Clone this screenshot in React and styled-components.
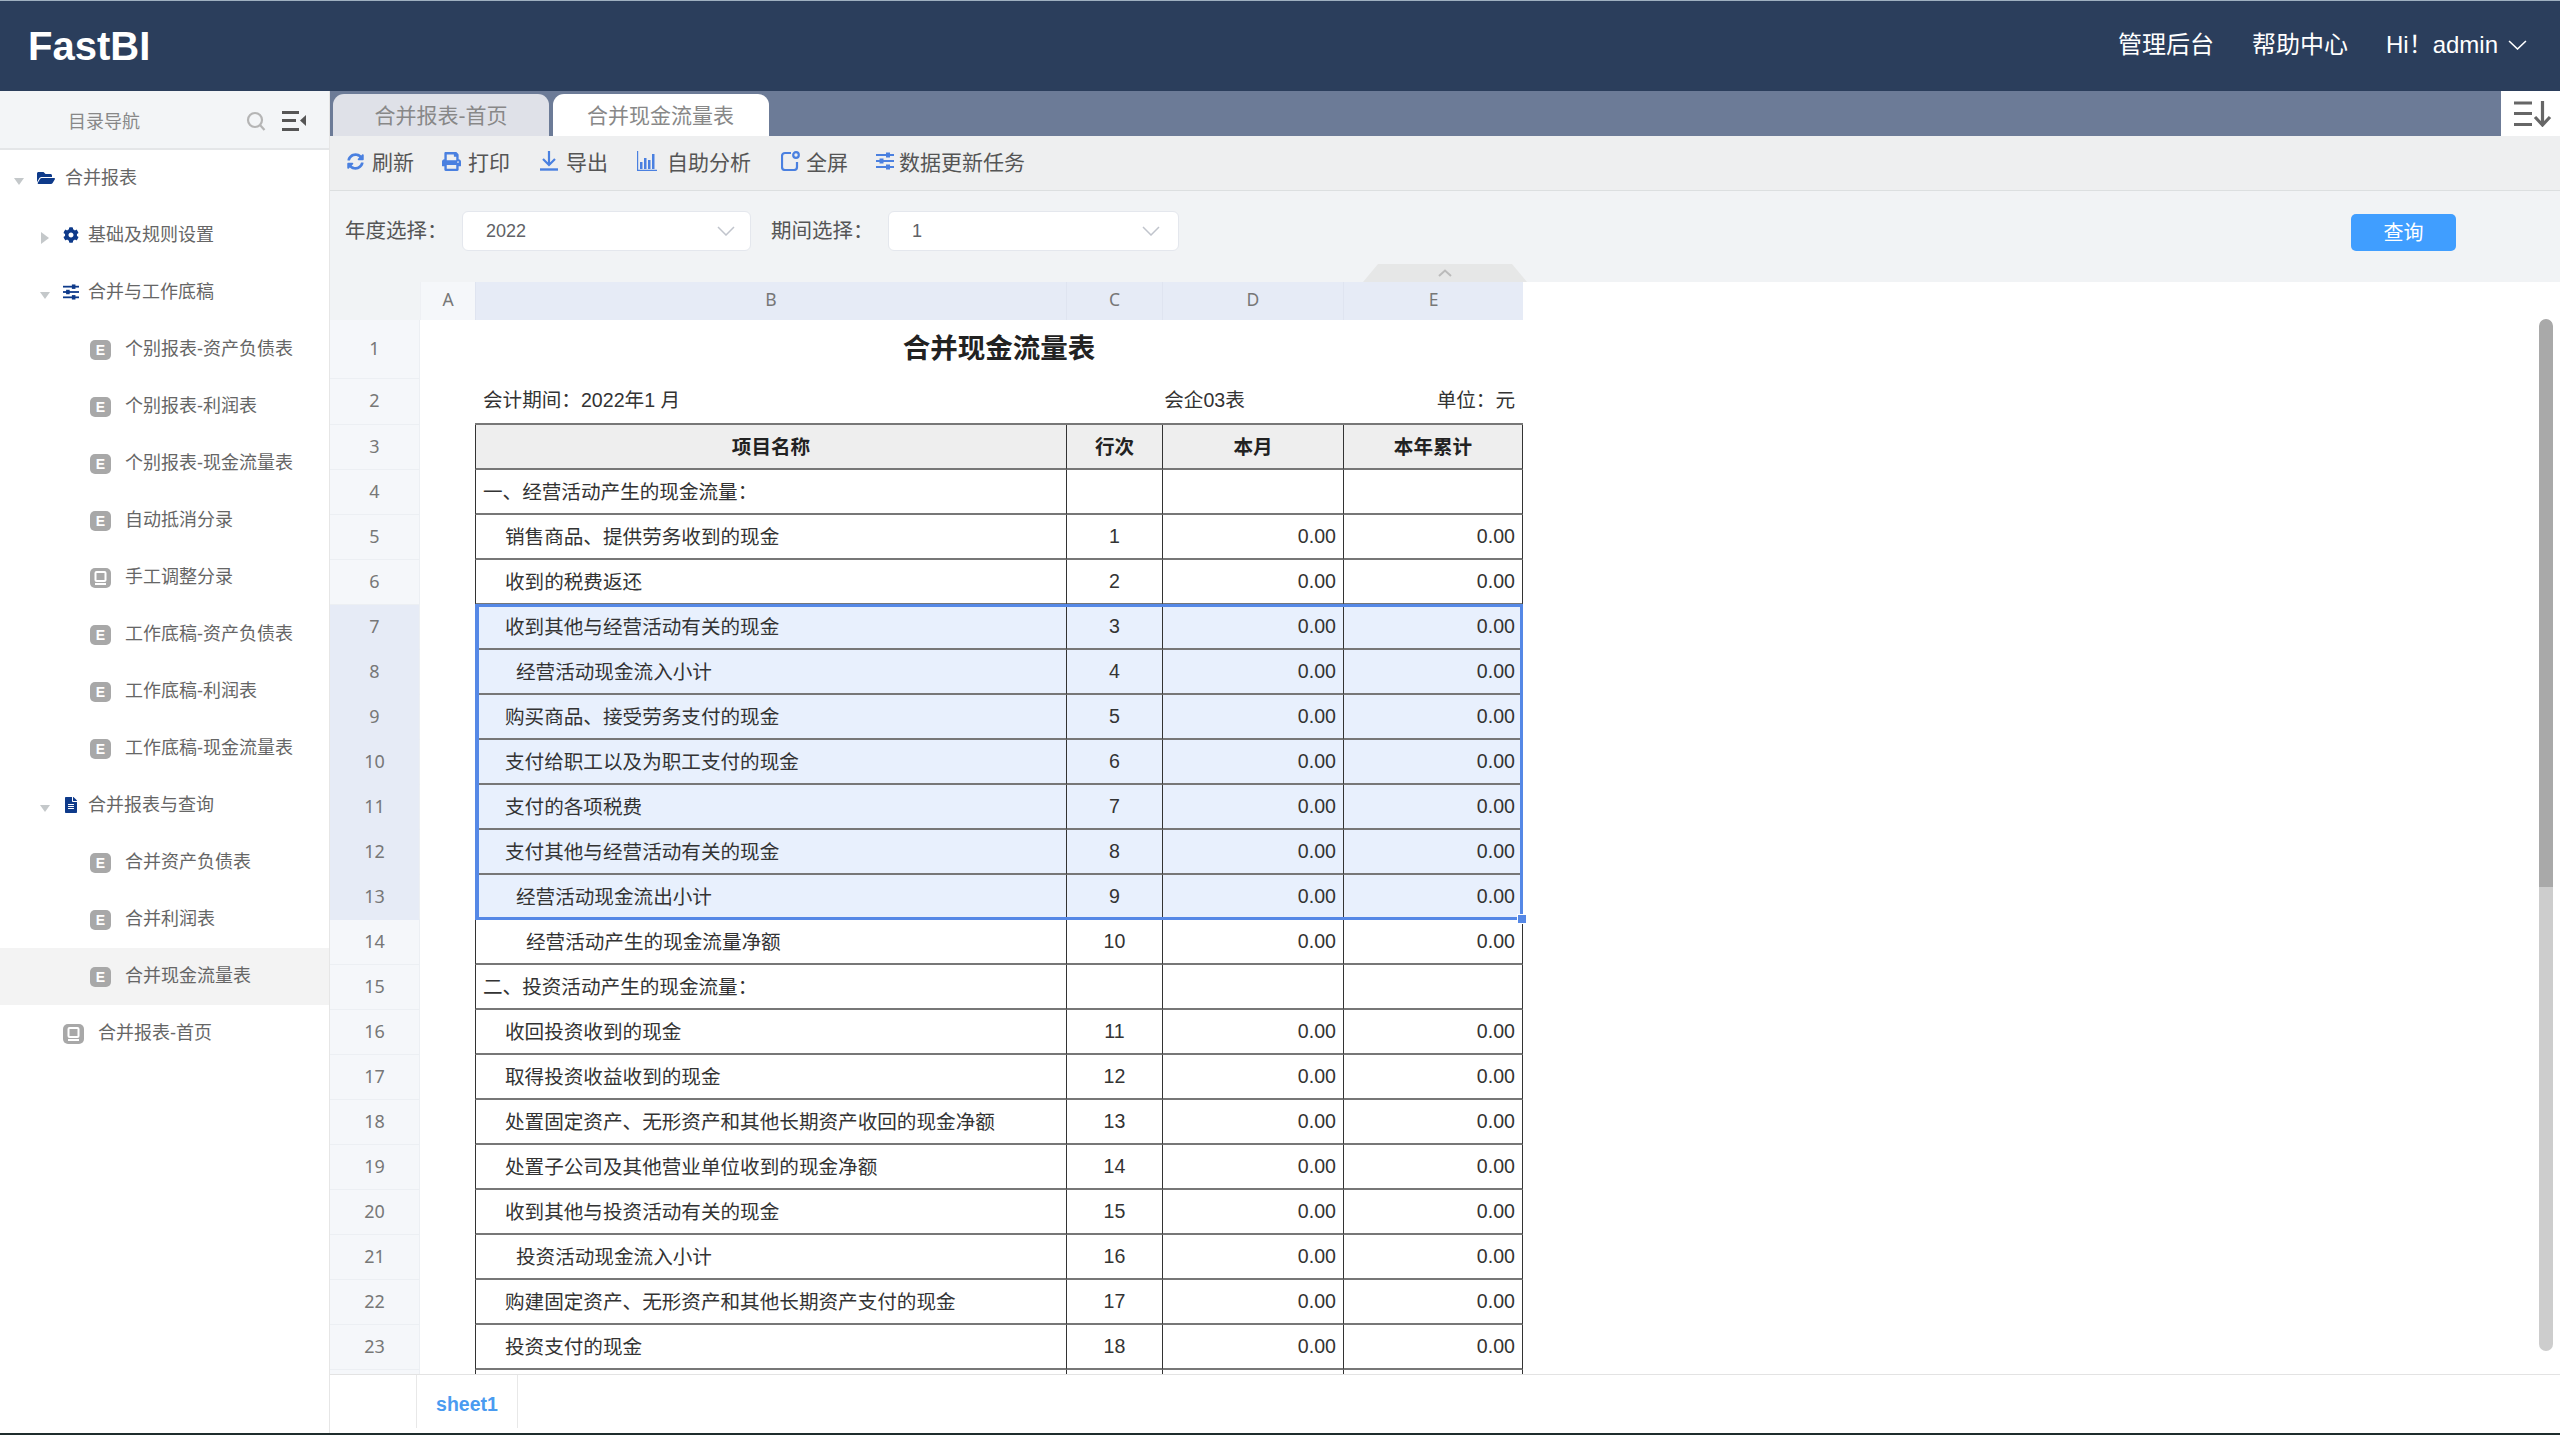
import React from "react";
import styled, { createGlobalStyle } from "styled-components";
import { FaFolderOpen, FaCog, FaFileAlt, FaPrint, FaSyncAlt } from "react-icons/fa";

const Global = createGlobalStyle`
  html, body { margin: 0; padding: 0; background: #fff; }
  * { box-sizing: border-box; }
  body { font-family: "Liberation Sans", "Noto Sans CJK SC", sans-serif; }
`;

const Page = styled.div`
  width: 2560px; height: 1435px; display: flex; flex-direction: column;
  overflow: hidden; border-bottom: 2px solid #1f2d2d;
`;
const Header = styled.header`
  height: 91px; flex: none; display: flex; align-items: center;
  background: #2b3e5c; border-top: 1px solid #9fb0c0; padding: 0 33px 0 28px; color: #fff;
`;
const Logo = styled.div`font-size: 40px; font-weight: 700; flex: 1; line-height: 1;`;
const HeadLink = styled.a`font-size: 24px; margin-right: 38px; padding-bottom: 7px; color: #fff;`;
const UserMenu = styled.div`display: flex; align-items: center; font-size: 24px; gap: 10px; padding-bottom: 3px;`;
const UserName = styled.span`padding-bottom: 4px;`;

const Body = styled.div`flex: 1; display: flex; min-height: 0;`;
const Sidebar = styled.aside`width: 330px; flex: none; border-right: 1px solid #e6e6e6; background: #fff;`;
const SideHead = styled.div`
  height: 59px; display: flex; align-items: center; padding: 2px 23px 0 68px;
  background: #f3f5f7; border-bottom: 2px solid #e4e6e8; color: #888; font-size: 18px; gap: 16px;
`;
const SideTitle = styled.span`flex: 1; padding-bottom: 2px;`;
const TreeRow = styled.div`
  height: 57px; display: flex; align-items: center; padding-left: ${p => p.$pad}px;
  background: ${p => (p.$active ? "#f3f3f3" : "transparent")};
  color: #666; font-size: 18px; white-space: nowrap;
`;
const TreeLabel = styled.span`padding-bottom: 6px;`;
const Caret = styled.i`
  flex: none; width: 11px; margin-right: 13px; display: flex; justify-content: center; margin-top: 5px;
  &::before {
    content: ""; border-style: solid; display: block;
    border-width: ${p => (p.$open ? "7px 5.5px 0 5.5px" : "6px 0 6px 8px")};
    border-color: ${p => (p.$open ? "#c4c8ca transparent transparent transparent" : "transparent transparent transparent #c4c8ca")};
  }
`;
const DirIcon = styled.span`
  flex: none; width: ${p => p.$w}px; margin-right: ${p => p.$mr}px; display: flex;
  align-items: center; justify-content: center; color: #0e3a8a; font-size: ${p => p.$w}px;
  padding-bottom: 2px;
`;
const FileBadge = styled.span`
  flex: none; width: 21px; height: 20px; margin-right: 14px; border-radius: 5px;
  background: #a8a8a8; color: #fff; font: 700 14px/20px "Liberation Sans", sans-serif;
  text-align: center; display: flex; align-items: center; justify-content: center;
`;

const Main = styled.main`flex: 1; min-width: 0; display: flex; flex-direction: column;`;
const TabBar = styled.div`
  height: 45px; flex: none; display: flex; align-items: flex-end; gap: 3.500px;
  background: #6c7b97; padding-left: 3px;
`;
const Tab = styled.div`
  width: 216px; height: 42px; border-radius: 11px 11px 0 0; font-size: 21px; line-height: 44px;
  text-align: center; color: #888; background: ${p => (p.$active ? "#fff" : "#dfe1e8")};
`;
const SideToggle = styled.div`
  width: 59px; height: 45px; margin-left: auto; background: #fff; color: #666;
  display: flex; align-items: center; justify-content: center; padding-left: 4px;
`;
const Toolbar = styled.div`
  height: 55px; flex: none; display: flex; align-items: center; padding: 0 0 4px 17px;
  background: #eeeff0; border-bottom: 1px solid #dcdfe0;
`;
const Tool = styled.button`
  all: unset; display: flex; align-items: center; gap: ${p => p.$gap}px; margin-right: ${p => p.$mr}px;
  color: #555; font: 21px "Liberation Sans", "Noto Sans CJK SC", sans-serif; white-space: nowrap;
  svg { color: #4a80e0; flex: none; }
`;
const FilterBar = styled.div`
  height: 91px; flex: none; position: relative; display: flex; align-items: flex-start;
  padding: 20px 104px 0 15px; background: #f1f3f5;
`;
const FilterLabel = styled.label`width: ${p => p.$w}px; flex: none; font-size: 20.500px; line-height: 40px; color: #555;`;
const Select = styled.div`
  width: ${p => p.$w}px; height: 40px; flex: none; margin-right: ${p => p.$mr || 0}px;
  display: flex; align-items: center; justify-content: space-between;
  padding: 0 ${p => p.$pr}px 0 23px; background: #fff; border: 1px solid #e4e7ed; border-radius: 6px;
  color: #606266; font-size: 18px;
`;
const QueryBtn = styled.button`
  all: unset; width: 105px; height: 37px; margin: 3px 0 0 auto; background: #409eff; color: #fff;
  border-radius: 5px; text-align: center; font: 20px/38px "Liberation Sans", "Noto Sans CJK SC", sans-serif;
`;
const Collapse = styled.div`
  position: absolute; left: 1033px; top: 73px; width: 164px; height: 18px; background: #e6e7e7;
  clip-path: polygon(15px 0, 149px 0, 164px 100%, 0 100%);
  display: flex; justify-content: center; align-items: center; color: #bbb;
`;

const Sheet = styled.section`flex: 1; min-height: 0; position: relative; overflow: hidden; background: #fff;`;
const GridBody = styled.div`position: relative; width: 1193px;`;
const Row = styled.div`
  display: grid; grid-template-columns: 90px 55px 591px 96px 181px 180px;
  height: ${p => p.$h || 45}px;
  font-size: 19.600px; color: #333;
`;
const Corner = styled.div`background: #f1f3f5;`;
const ColHead = styled.div`
  display: flex; align-items: center; justify-content: center; padding-bottom: 5px;
  font: 17.500px "Noto Sans", sans-serif; color: #777;
  background: ${p => (p.$sel ? "#e6ebf6" : "#f5f7fa")};
  border-left: 1px solid ${p => (p.$sel ? "#dfe4f0" : "#eef0f4")};
`;
const RowNum = styled.div`
  display: flex; align-items: center; justify-content: center; padding-bottom: 3px;
  font: 18px "Noto Sans", sans-serif; color: #777;
  background: ${p => (p.$sel ? "#e6ebf6" : "#f5f7fa")};
  border-bottom: 1px solid ${p => (p.$sel ? "#e6ebf6" : "#eceff3")};
  border-right: 1px solid #eceff3;
`;
const Gutter = styled.div``;
const Title = styled.div`
  grid-column: span 4; display: flex; align-items: center; justify-content: center;
  font-size: 27.500px; font-weight: 700; color: #222; padding-bottom: 7px;
`;
const Cell = styled.div`
  display: flex; align-items: center; white-space: nowrap; overflow: hidden;
  border-left: 1px solid #333; border-bottom: 2px solid #777;
  padding: 0 0 3px ${p => p.$indent || 7}px;
  background: ${p => (p.$sel ? "#e8f0fd" : "#fff")};
  ${p => p.$last && "border-right: 1px solid #333;"}
`;
const NumCell = styled(Cell)`justify-content: center; padding: 0 0 1px;`;
const AmountCell = styled(Cell)`justify-content: flex-end; padding: 0 7px 0 0;`;
const HeadCell = styled(NumCell)`background: #eee; font-weight: 700; color: #222; padding-bottom: 3px;`;
const MetaCell = styled.div`
  display: flex; align-items: center; white-space: nowrap; border-bottom: 2px solid #777;
  padding: 0 ${p => (p.$right ? 8 : 0)}px 6px ${p => (p.$left ? 8 : 0)}px;
  grid-column: span ${p => p.$span || 1};
  justify-content: ${p => (p.$right ? "flex-end" : p.$left ? "flex-start" : "center")};
`;
const Selection = styled.div`
  position: absolute; left: 145px; top: 322px; width: 1048px; height: 316px;
  border: 3px solid #5588e6; border-left-width: 4px; pointer-events: none;
`;
const FillHandle = styled.span`
  position: absolute; right: -6px; bottom: -6px; width: 8px; height: 8px;
  background: #5588e6; outline: 1px solid #fff;
`;
const ScrollTrack = styled.div`
  position: absolute; right: 7px; top: 37px; width: 14px; height: 1032px;
  border-radius: 7px; background: #cdcdcd; overflow: hidden;
`;
const ScrollThumb = styled.div`height: 568px; background: #a9a9a9; border-radius: 7px 7px 0 0;`;

const Footer = styled.footer`
  height: 59px; flex: none; padding: 0 0 5px 86px; border-top: 1px solid #e3e3e3; background: #fff; display: flex;
`;
const SheetTab = styled.div`
  width: 102px; border: solid #e8e8e8; border-width: 0 1px; text-align: center;
  font-size: 19.500px; font-weight: 700; color: #4a9bf0; line-height: 58px;
`;

const Chevron = ({ w = 18, h = 10, color = "#c0c4cc", sw = 1.5 }) => (
  <svg width={w} height={h} viewBox="0 0 18 10" fill="none" preserveAspectRatio="none">
    <path d="M1 1l8 8 8-8" stroke={color} strokeWidth={sw} />
  </svg>
);
const SearchIcon = () => (
  <svg width="20" height="20" viewBox="0 0 20 20" fill="none" stroke="#b5b5b5" strokeWidth="2.200">
    <circle cx="9" cy="9" r="7" /><path d="M14 14l4.500 5" />
  </svg>
);
const MenuIcon = () => (
  <svg width="24" height="20" viewBox="0 0 24 20" fill="#555">
    <rect width="17" height="3" /><rect y="8" width="14" height="3" /><rect y="17" width="17" height="3" />
    <path d="M24 4v11l-6-5.500z" />
  </svg>
);
const ListDownIcon = () => (
  <svg width="38" height="27" viewBox="0 0 38 27" fill="none" stroke="currentColor" strokeWidth="3.200">
    <path d="M0 3h18M0 13.500h18M0 24.500h18" /><path d="M28.500 1v23M21 17l7.500 8 7.500-8" />
  </svg>
);
const SlidersIcon = ({ size = 18 }) => (
  <svg width={size} height={size} viewBox="0 0 18 18" fill="currentColor">
    <rect y="2" width="18" height="2" /><rect y="8" width="18" height="2" /><rect y="14" width="18" height="2" />
    <rect x="10" y="0.500" width="4" height="5" /><rect x="3.500" y="6.500" width="4" height="5" /><rect x="10" y="12.500" width="4" height="5" />
  </svg>
);
const DownloadIcon = () => (
  <svg width="18" height="20" viewBox="0 0 18 20" fill="none" stroke="currentColor">
    <path d="M9 0v13M3 8l6 6 6-6" strokeWidth="2.200" /><path d="M0 18.500h18" strokeWidth="2.400" />
  </svg>
);
const BarsIcon = () => (
  <svg width="20" height="20" viewBox="0 0 20 20" fill="currentColor">
    <path d="M0 0h1.200v18.800H24v1.200H0z" /><rect x="3" y="11" width="2.500" height="7" /><rect x="7" y="7" width="2.500" height="11" />
    <rect x="11" y="9" width="2.500" height="9" /><rect x="15" y="3" width="2.500" height="15" />
  </svg>
);
const FullIcon = () => (
  <svg width="19" height="20" viewBox="0 0 19 20" fill="none" stroke="currentColor" strokeWidth="2.200">
    <path d="M10 2H4a3 3 0 0 0-3 3v11a3 3 0 0 0 3 3h9a3 3 0 0 0 3-3v-5" /><circle cx="15" cy="4" r="2.800" />
  </svg>
);
const MonitorGlyph = () => (
  <svg width="13" height="14" viewBox="0 0 13 14" fill="none" stroke="#fff" strokeWidth="2">
    <rect x="1.500" y="1" width="10" height="9" rx="1" /><path d="M1 13h11" />
  </svg>
);

const tools = [
  { label: "刷新", icon: <FaSyncAlt size={17} />, gap: 8, mr: 28 },
  { label: "打印", icon: <FaPrint size={19} />, gap: 7, mr: 30 },
  { label: "导出", icon: <DownloadIcon />, gap: 8, mr: 29 },
  { label: "自助分析", icon: <BarsIcon />, gap: 10, mr: 30 },
  { label: "全屏", icon: <FullIcon />, gap: 6, mr: 28 },
  { label: "数据更新任务", icon: <SlidersIcon />, gap: 5, mr: 0 },
];

const rows = [
  ["一、经营活动产生的现金流量：", 7, ""],
  ["销售商品、提供劳务收到的现金", 29, 1],
  ["收到的税费返还", 29, 2],
  ["收到其他与经营活动有关的现金", 29, 3],
  ["经营活动现金流入小计", 40, 4],
  ["购买商品、接受劳务支付的现金", 29, 5],
  ["支付给职工以及为职工支付的现金", 29, 6],
  ["支付的各项税费", 29, 7],
  ["支付其他与经营活动有关的现金", 29, 8],
  ["经营活动现金流出小计", 40, 9],
  ["经营活动产生的现金流量净额", 50, 10],
  ["二、投资活动产生的现金流量：", 7, ""],
  ["收回投资收到的现金", 29, 11],
  ["取得投资收益收到的现金", 29, 12],
  ["处置固定资产、无形资产和其他长期资产收回的现金净额", 29, 13],
  ["处置子公司及其他营业单位收到的现金净额", 29, 14],
  ["收到其他与投资活动有关的现金", 29, 15],
  ["投资活动现金流入小计", 40, 16],
  ["购建固定资产、无形资产和其他长期资产支付的现金", 29, 17],
  ["投资支付的现金", 29, 18],
  ["", 7, ""],
];

const Dir = ({ pad, open, icon, w, mr, children }) => (
  <TreeRow $pad={pad}>
    <Caret $open={open} />
    <DirIcon $w={w} $mr={mr}>{icon}</DirIcon>
    <TreeLabel>{children}</TreeLabel>
  </TreeRow>
);
const Leaf = ({ pad = 90, screen, active, children }) => (
  <TreeRow $pad={pad} $active={active}>
    <FileBadge>{screen ? <MonitorGlyph /> : "E"}</FileBadge>
    <TreeLabel>{children}</TreeLabel>
  </TreeRow>
);

export default function App() {
  return (
    <Page>
      <Global />
      <Header>
        <Logo>FastBI</Logo>
        <HeadLink>管理后台</HeadLink>
        <HeadLink>帮助中心</HeadLink>
        <UserMenu>
          <UserName>Hi！admin</UserName>
          <Chevron color="#fff" w={19} h={10} />
        </UserMenu>
      </Header>
      <Body>
        <Sidebar>
          <SideHead>
            <SideTitle>目录导航</SideTitle>
            <SearchIcon />
            <MenuIcon />
          </SideHead>
          <Dir pad={13} open icon={<FaFolderOpen />} w={18} mr={10}>合并报表</Dir>
          <Dir pad={39} icon={<FaCog />} w={16} mr={9}>基础及规则设置</Dir>
          <Dir pad={39} open icon={<SlidersIcon size={16} />} w={16} mr={9}>合并与工作底稿</Dir>
          <Leaf>个别报表-资产负债表</Leaf>
          <Leaf>个别报表-利润表</Leaf>
          <Leaf>个别报表-现金流量表</Leaf>
          <Leaf>自动抵消分录</Leaf>
          <Leaf screen>手工调整分录</Leaf>
          <Leaf>工作底稿-资产负债表</Leaf>
          <Leaf>工作底稿-利润表</Leaf>
          <Leaf>工作底稿-现金流量表</Leaf>
          <Dir pad={39} open icon={<FaFileAlt />} w={16} mr={9}>合并报表与查询</Dir>
          <Leaf>合并资产负债表</Leaf>
          <Leaf>合并利润表</Leaf>
          <Leaf active>合并现金流量表</Leaf>
          <Leaf pad={63} screen>合并报表-首页</Leaf>
        </Sidebar>
        <Main>
          <TabBar>
            <Tab>合并报表-首页</Tab>
            <Tab $active>合并现金流量表</Tab>
            <SideToggle><ListDownIcon /></SideToggle>
          </TabBar>
          <Toolbar>
            {tools.map(t => (
              <Tool key={t.label} $gap={t.gap} $mr={t.mr}>{t.icon}{t.label}</Tool>
            ))}
          </Toolbar>
          <FilterBar>
            <FilterLabel $w={117}>年度选择：</FilterLabel>
            <Select $w={289} $mr={20} $pr={15}>2022<Chevron /></Select>
            <FilterLabel $w={117}>期间选择：</FilterLabel>
            <Select $w={291} $pr={18}>1<Chevron /></Select>
            <QueryBtn>查询</QueryBtn>
            <Collapse>
              <svg width="14" height="8" viewBox="0 0 14 8" fill="none" stroke="currentColor" strokeWidth="2"><path d="M1 7l6-5.500L13 7" /></svg>
            </Collapse>
          </FilterBar>
          <Sheet>
            <GridBody>
              <Row $h={38}>
                <Corner />
                <ColHead>A</ColHead>
                <ColHead $sel>B</ColHead>
                <ColHead $sel>C</ColHead>
                <ColHead $sel>D</ColHead>
                <ColHead $sel>E</ColHead>
              </Row>
              <Row $h={59}>
                <RowNum>1</RowNum>
                <Gutter />
                <Title>合并现金流量表</Title>
              </Row>
              <Row $h={46}>
                <RowNum>2</RowNum>
                <Gutter />
                <MetaCell $left>会计期间：2022年1 月</MetaCell>
                <MetaCell $span={2}>会企03表</MetaCell>
                <MetaCell $right>单位：元</MetaCell>
              </Row>
              <Row>
                <RowNum>3</RowNum>
                <Gutter />
                <HeadCell>项目名称</HeadCell>
                <HeadCell>行次</HeadCell>
                <HeadCell>本月</HeadCell>
                <HeadCell $last>本年累计</HeadCell>
              </Row>
              {rows.map(([name, indent, no], i) => {
                const n = i + 4;
                const sel = n >= 7 && n <= 13;
                return (
                  <Row key={n}>
                    <RowNum $sel={sel}>{n}</RowNum>
                    <Gutter />
                    <Cell $indent={indent} $sel={sel}>{name}</Cell>
                    <NumCell $sel={sel}>{no}</NumCell>
                    <AmountCell $sel={sel}>{no !== "" && "0.00"}</AmountCell>
                    <AmountCell $sel={sel} $last>{no !== "" && "0.00"}</AmountCell>
                  </Row>
                );
              })}
              <Selection><FillHandle /></Selection>
            </GridBody>
            <ScrollTrack><ScrollThumb /></ScrollTrack>
          </Sheet>
          <Footer><SheetTab>sheet1</SheetTab></Footer>
        </Main>
      </Body>
    </Page>
  );
}
